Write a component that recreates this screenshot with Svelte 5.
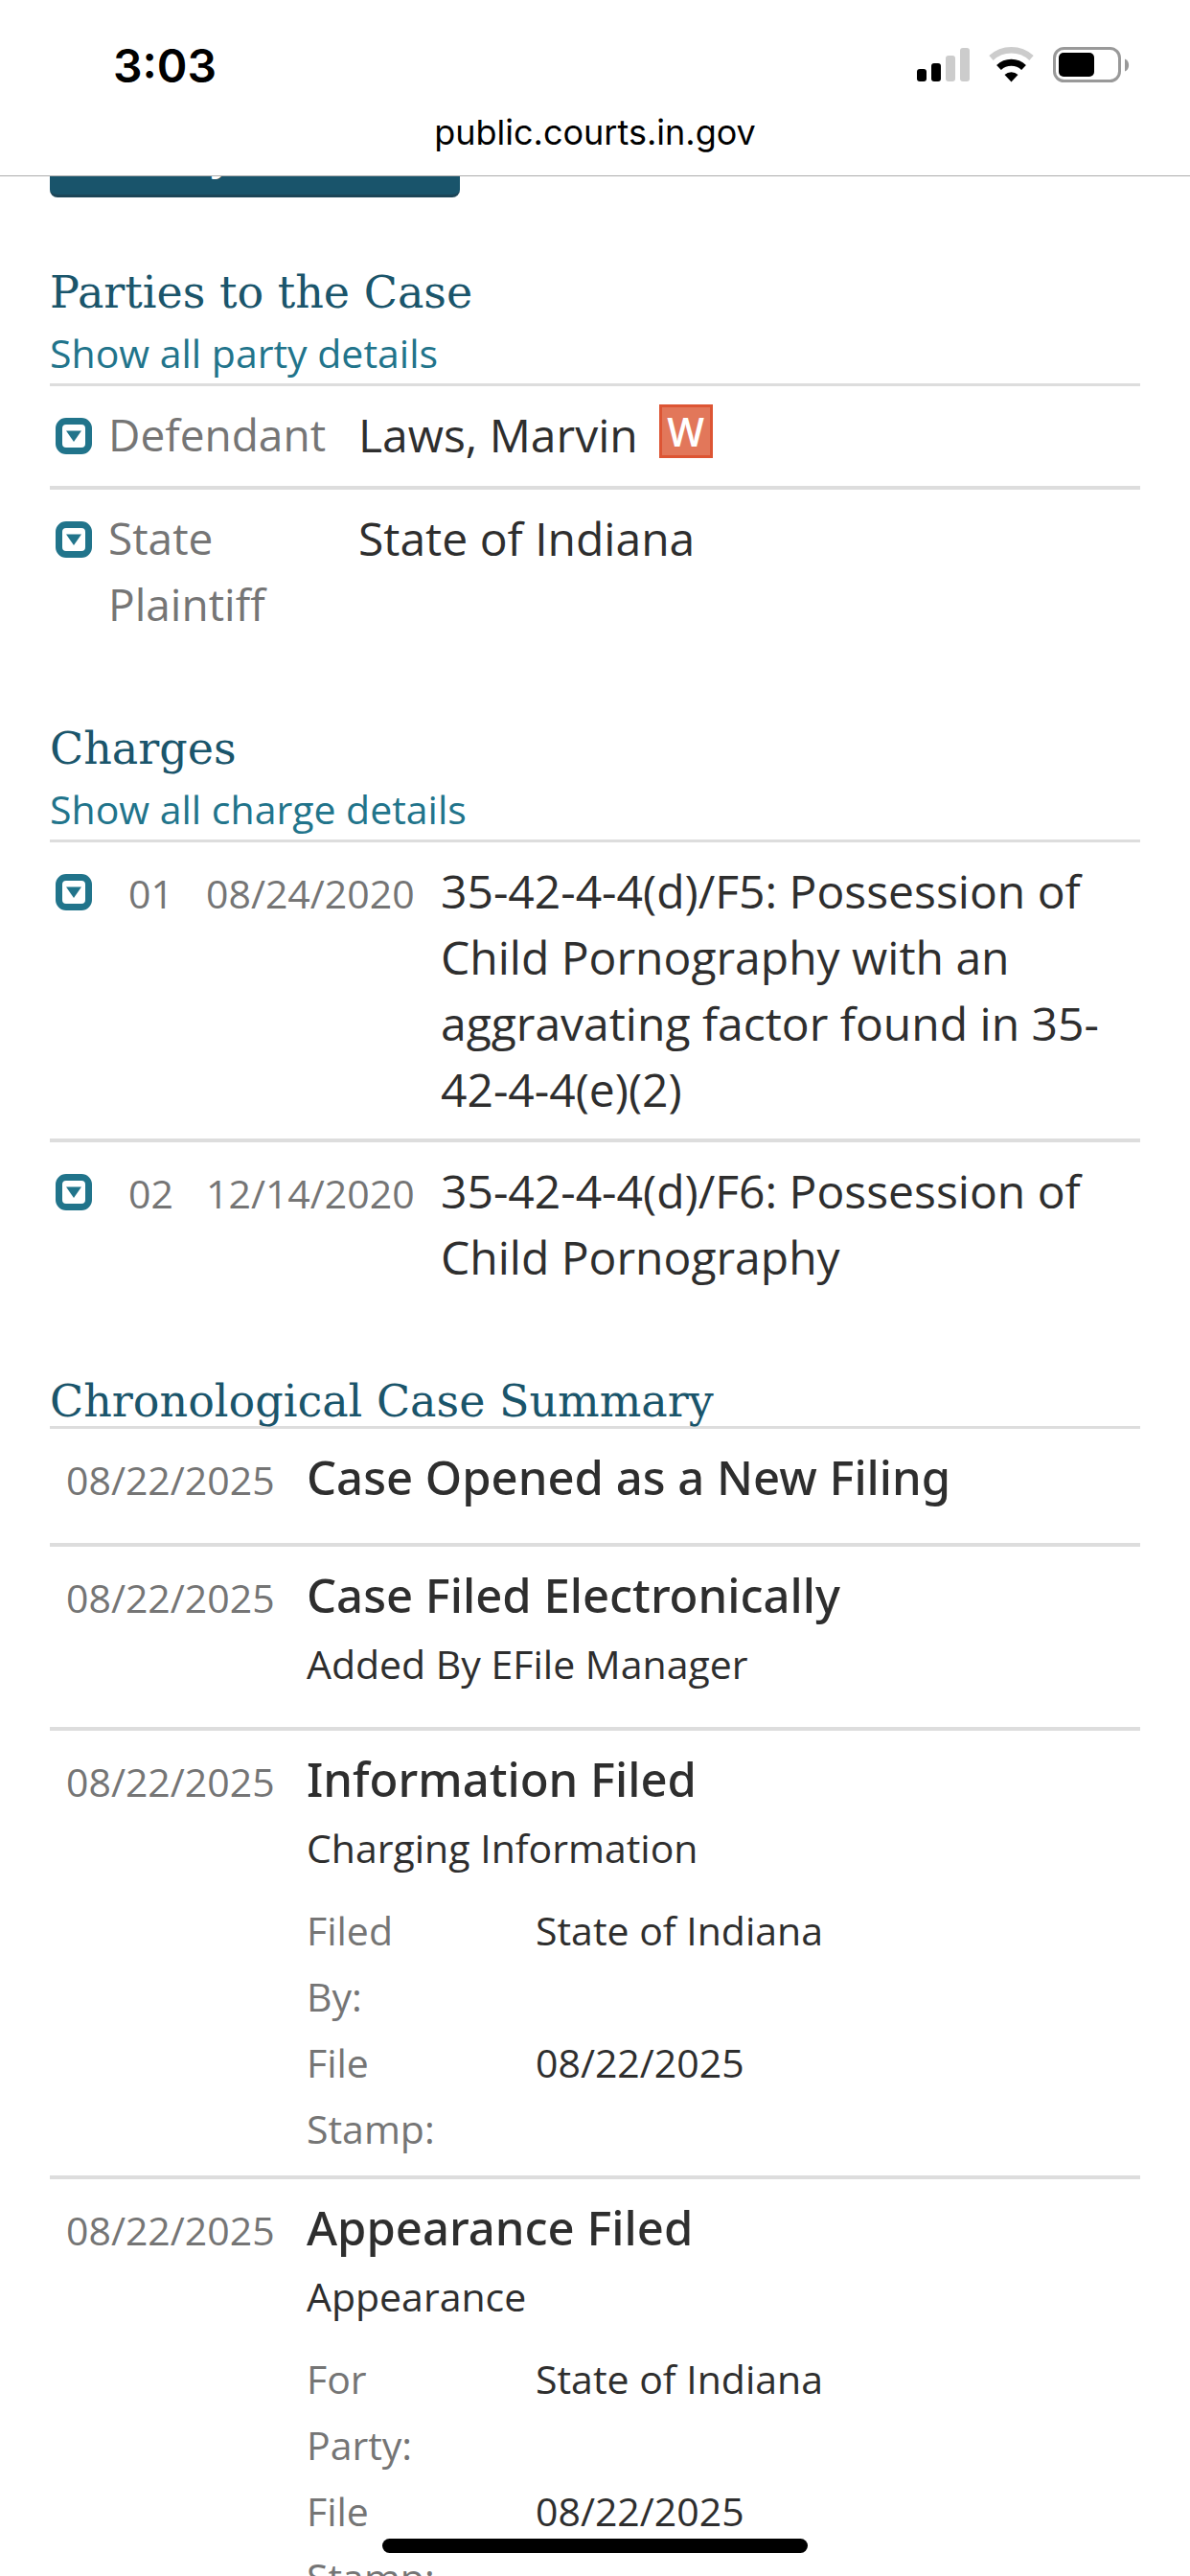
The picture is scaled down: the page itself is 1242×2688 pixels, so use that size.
<script>
  const parties = [
    { id: 'defendant', role: 'Defendant', name: 'Laws, Marvin', warrant: true },
    { id: 'plaintiff', role: 'State Plaintiff', name: 'State of Indiana', warrant: false }
  ];

  // Each charge is a list of pieces; a line may break between two pieces.
  const charges = [
    {
      number: '01',
      date: '08/24/2020',
      text: ['35-42-4-4(d)/F5: Possession of Child Pornography with an aggravating factor found in 35-', '42-4-4(e)(2)']
    },
    { number: '02', date: '12/14/2020', text: ['35-42-4-4(d)/F6: Possession of Child Pornography'] }
  ];

  const events = [
    { date: '08/22/2025', title: 'Case Opened as a New Filing' },
    { date: '08/22/2025', title: 'Case Filed Electronically', note: 'Added By EFile Manager' },
    {
      date: '08/22/2025',
      title: 'Information Filed',
      note: 'Charging Information',
      details: [
        ['Filed By:', 'State of Indiana'],
        ['File Stamp:', '08/22/2025']
      ]
    },
    {
      date: '08/22/2025',
      title: 'Appearance Filed',
      note: 'Appearance',
      details: [
        ['For Party:', 'State of Indiana'],
        ['File Stamp:', '08/22/2025']
      ]
    }
  ];
</script>

{#snippet toggle(label)}
  <button class="toggle" type="button" aria-label={label}>
    <svg viewBox="0 0 38 38" aria-hidden="true">
      <rect x="3.5" y="3.5" width="31" height="31" rx="7.5" fill="none" stroke="#21748b" stroke-width="7" />
      <path d="M11 13.5h16L19 25z" fill="#21748b" />
    </svg>
  </button>
{/snippet}

<div class="screen">
  <header class="browser">
    <div class="status">
      <span class="time">3:03</span>
      <svg class="indicators" viewBox="0 0 222 38" role="img" aria-label="Signal, Wi-Fi and battery">
        <g fill="#000">
          <rect x="0" y="23" width="10" height="13" rx="3" />
          <rect x="15" y="17" width="10" height="19" rx="3" />
        </g>
        <g fill="#ccc">
          <rect x="30" y="9" width="10" height="27" rx="3" />
          <rect x="45" y="1" width="10" height="35" rx="3" />
        </g>
        <path d="M77.5 11.5A31 31 0 0 1 119.5 11.5" fill="none" stroke="#ccc" stroke-width="6.5" />
        <path d="M85.5 21.5A19 19 0 0 1 111.5 21.5" fill="none" stroke="#000" stroke-width="7" />
        <path d="M98.5 36.5L91.5 29A10.5 10.5 0 0 1 105.5 29z" fill="#000" />
        <rect x="143.5" y="1.5" width="68" height="34" rx="10" fill="none" stroke="#999" stroke-width="3" />
        <rect x="148" y="6" width="37" height="25" rx="5" fill="#000" />
        <path d="M217 12.5C222.5 14.5 222.5 23.5 217 25.5z" fill="#999" />
      </svg>
    </div>
    <div class="address">public.courts.in.gov</div>
  </header>

  <main>
    <button class="primary" type="button">Modify Search</button>

    <section>
      <h2>Parties to the Case</h2>
      <div><a class="expand" href="#parties">Show all party details</a></div>
      <table class="parties" id="parties">
        <colgroup><col class="w-icon" /><col class="w-role" /><col /></colgroup>
        <tbody>
          {#each parties as party (party.id)}
            <tr>
              <td class="icon">{@render toggle(`Show details for ${party.name}`)}</td>
              <td class="role">{party.role}</td>
              <td>
                <div class="name">
                  <span>{party.name}</span>
                  {#if party.warrant}<span class="warrant" title="Warrant">W</span>{/if}
                </div>
              </td>
            </tr>
          {/each}
        </tbody>
      </table>
    </section>

    <section>
      <h2>Charges</h2>
      <div><a class="expand" href="#charges">Show all charge details</a></div>
      <table class="charges" id="charges">
        <colgroup><col class="w-toggle" /><col class="w-number" /><col class="w-filed" /><col /></colgroup>
        <tbody>
          {#each charges as charge (charge.number)}
            <tr>
              <td class="icon">{@render toggle(`Show details for charge ${charge.number}`)}</td>
              <td class="muted"><small>{charge.number}</small></td>
              <td class="muted"><small>{charge.date}</small></td>
              <td>{#each charge.text as piece, i}{#if i > 0}<wbr />{/if}{piece}{/each}</td>
            </tr>
          {/each}
        </tbody>
      </table>
    </section>

    <section>
      <h2>Chronological Case Summary</h2>
      <table class="events">
        <colgroup><col class="w-event" /><col /></colgroup>
        <tbody>
          {#each events as event}
            <tr>
              <td class="muted date"><small>{event.date}</small></td>
              <td>
                <div class="entry">
                  <div class="title">{event.title}</div>
                  {#if event.note}<div><small>{event.note}</small></div>{/if}
                </div>
                {#if event.details}
                  <dl>
                    {#each event.details as [term, value]}
                      <dt class="muted"><small>{term}</small></dt>
                      <dd><small>{value}</small></dd>
                    {/each}
                  </dl>
                {/if}
              </td>
            </tr>
          {/each}
        </tbody>
      </table>
    </section>
  </main>

  <div class="home"></div>
</div>

<style>
  :global(body) {
    background: #fff;
  }

  .screen {
    position: relative;
    display: flex;
    flex-direction: column;
    height: 100vh;
    overflow: hidden;
    background: #fff;
    color: #2e2e2e;
    font: 48px/69px 'Open Sans', 'Noto Sans', sans-serif;
  }

  .browser {
    flex: none;
    border-bottom: 1px solid #adadad;
    background: #fff;
    color: #000;
    font-family: Inter, 'Liberation Sans', sans-serif;
  }

  .status {
    display: flex;
    align-items: center;
    justify-content: space-between;
    height: 70px;
    padding: 33px 63px 0 118px;
  }

  .time {
    font-size: 48px;
    font-weight: 600;
  }

  .indicators {
    width: 222px;
    height: 38px;
  }

  .address {
    height: 80px;
    font-size: 36px;
    line-height: 70px;
    text-align: center;
  }

  main {
    flex: 1;
    min-height: 0;
    padding: 0 52px;
    overflow: hidden;
  }

  .primary {
    display: block;
    width: 428px;
    height: 94px;
    margin: -72px 0 73px;
    padding: 0 32px 0 0;
    border: 0;
    border-bottom: 3px solid #1c4557;
    border-radius: 8px;
    background: #19546b;
    color: #fff;
    font: inherit;
  }

  h2 {
    margin: 0;
    color: #1a556b;
    font: 46px/52px 'DejaVu Serif', serif;
  }

  section + section {
    margin-top: 90px;
  }

  .expand {
    color: #21748b;
    font-size: 41px;
    line-height: 1;
    text-decoration: none;
  }

  table {
    width: 100%;
    border-spacing: 0;
    table-layout: fixed;
  }

  .w-icon {
    width: 61px;
  }

  .w-role {
    width: 261px;
  }

  .w-toggle {
    width: 82px;
  }

  .w-number {
    width: 81px;
  }

  .w-filed {
    width: 245px;
  }

  .w-event {
    width: 268px;
  }

  td {
    padding: 16px 0 17px;
    border-top: 4px solid #ddd;
    vertical-align: top;
  }

  tr:first-child td {
    border-top-width: 3px;
  }

  .parties td {
    padding-bottom: 19px;
  }

  .parties tr:last-child td,
  .charges tr:last-child td {
    padding-bottom: 0;
  }

  td.icon {
    padding-left: 6px;
  }

  td.date {
    padding-left: 17px;
  }

  .toggle {
    display: block;
    width: 38px;
    height: 38px;
    margin-top: 17px;
    padding: 0;
    border: 0;
    background: none;
  }

  .toggle svg {
    display: block;
  }

  .role {
    color: #757575;
    font-size: 46px;
  }

  .muted {
    color: #757575;
  }

  small {
    font-size: 41px;
    line-height: 1;
  }

  .name {
    display: flex;
    gap: 22px;
  }

  .warrant {
    box-sizing: border-box;
    width: 56px;
    height: 56px;
    margin-top: 3px;
    border: 3px solid #dd5534;
    background: #e2775a;
    color: #fff;
    font-size: 41px;
    font-weight: 600;
    line-height: 50px;
    text-align: center;
  }

  .title {
    font-family: 'Noto Sans', 'Open Sans', sans-serif;
    font-size: 49px;
    font-weight: 500;
  }

  .entry {
    margin-bottom: 17px;
  }

  dl {
    display: grid;
    grid-template-columns: 140px 1fr;
    column-gap: 99px;
    margin: 0;
  }

  dd {
    margin: 0;
  }

  .home {
    position: absolute;
    bottom: 24px;
    left: 50%;
    width: 444px;
    height: 15px;
    margin-left: -222px;
    border-radius: 8px;
    background: #000;
  }
</style>
